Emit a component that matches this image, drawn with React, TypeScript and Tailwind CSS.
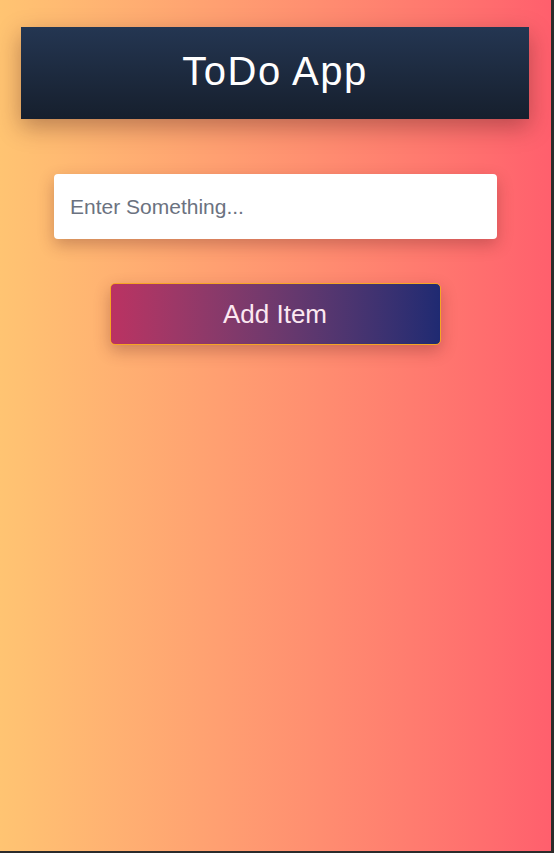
export default function App() {
  return (
    <div className="w-[554px] h-[853px] bg-[#2b2b2b] overflow-hidden" style={{ fontFamily: '"Liberation Sans", Arial, sans-serif' }}>
      <div className="w-[551px] h-[851px] bg-gradient-to-r from-[#ffc472] to-[#ff5f6d] flex flex-col items-center pt-[27px]">
        <div className="w-[508px] h-[92px] ml-[-1px] bg-gradient-to-b from-[#243652] to-[#161f2d] shadow-[0_8px_22px_rgba(60,20,20,0.35)] flex items-center justify-center">
          <h1 className="text-[40px] leading-none tracking-[1.5px] text-white pb-[4px]">ToDo App</h1>
        </div>
        <input
          className="mt-[55px] w-[443px] h-[65px] bg-white rounded-[4px] px-4 text-[21px] text-gray-800 placeholder:text-[#6b7280] outline-none shadow-[0_6px_16px_rgba(90,30,30,0.3)]"
          placeholder="Enter Something..."
        />
        <button className="mt-[44px] w-[331px] h-[62px] rounded-[5px] border border-[#f5a524] bg-gradient-to-r from-[#bb3262] to-[#1f2a72] text-[26px] text-[#fce8f1] shadow-[0_6px_16px_rgba(90,30,30,0.3)] ml-[-1px]">
          Add Item
        </button>
      </div>
    </div>
  );
}
